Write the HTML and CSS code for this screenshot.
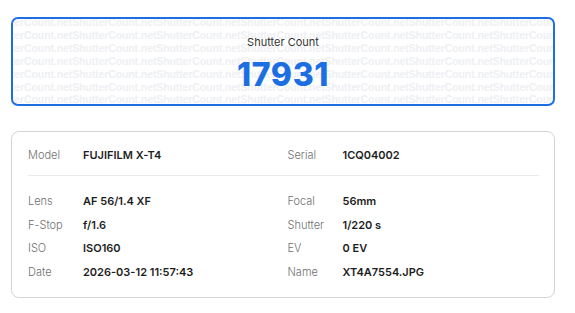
FILE: index.html
```html
<!DOCTYPE html>
<html lang="en">

<head>
    <meta charset="UTF-8">
    <meta name="viewport" content="width=device-width, initial-scale=1.0">
    <title>ShutterCount - Result</title>

    <link rel="stylesheet" href="styles.css">
</head>

<body>
    <div class="count-card">
        <div class="watermark">
            <div>ShutterCount.netShutterCount.netShutterCount.netShutterCount.netShutterCount.netShutterCount.netShutterCount.net</div>
            <div>ShutterCount.netShutterCount.netShutterCount.netShutterCount.netShutterCount.netShutterCount.netShutterCount.net</div>
            <div>ShutterCount.netShutterCount.netShutterCount.netShutterCount.netShutterCount.netShutterCount.netShutterCount.net</div>
            <div>ShutterCount.netShutterCount.netShutterCount.netShutterCount.netShutterCount.netShutterCount.netShutterCount.net</div>
            <div>ShutterCount.netShutterCount.netShutterCount.netShutterCount.netShutterCount.netShutterCount.netShutterCount.net</div>
            <div>ShutterCount.netShutterCount.netShutterCount.netShutterCount.netShutterCount.netShutterCount.netShutterCount.net</div>
            <div>ShutterCount.netShutterCount.netShutterCount.netShutterCount.netShutterCount.netShutterCount.netShutterCount.net</div>
        </div>
        <div class="count-title">Shutter Count</div>
        <div class="count-number">17931</div>
    </div>

    <div class="info-card">
        <div class="info-grid info-head">
            <div class="info-row"><span class="info-label">Model</span><span class="info-value">FUJIFILM X-T4</span></div>
            <div class="info-row"><span class="info-label">Serial</span><span class="info-value">1CQ04002</span></div>
        </div>
        <div class="info-grid info-body">
            <div class="info-row"><span class="info-label">Lens</span><span class="info-value">AF 56/1.4 XF</span></div>
            <div class="info-row"><span class="info-label">Focal</span><span class="info-value">56mm</span></div>
            <div class="info-row"><span class="info-label">F-Stop</span><span class="info-value">f/1.6</span></div>
            <div class="info-row"><span class="info-label">Shutter</span><span class="info-value">1/220 s</span></div>
            <div class="info-row"><span class="info-label">ISO</span><span class="info-value">ISO160</span></div>
            <div class="info-row"><span class="info-label">EV</span><span class="info-value">0 EV</span></div>
            <div class="info-row"><span class="info-label">Date</span><span class="info-value">2026-03-12 11:57:43</span></div>
            <div class="info-row"><span class="info-label">Name</span><span class="info-value">XT4A7554.JPG</span></div>
        </div>
    </div>
</body>

</html>
```

FILE: styles.css
```css
body {
    margin: 0;
    padding: 17px 20px 0 11px;
    font-family: Inter, "Noto Sans", sans-serif;
    background-color: white;
}

.count-card {
    position: relative;
    height: 85px;
    border: 2px solid #1b6fe3;
    border-radius: 7px;
    overflow: hidden;
    text-align: center;
}

.watermark {
    position: absolute;
    top: -3px;
    left: 0;
    right: 0;
    bottom: 0;
    font-family: "Liberation Sans", Arial, sans-serif;
    font-weight: bold;
    font-size: 10.5px;
    letter-spacing: -0.1px;
    line-height: 12.9px;
    color: #eef0f3;
    white-space: nowrap;
    text-indent: -25px;
    text-align: left;
}

.count-title {
    position: relative;
    padding-top: 16px;
    font-size: 11px;
    line-height: 14px;
    color: #333;
}

.count-number {
    position: relative;
    margin-top: 8px;
    font-size: 32px;
    font-weight: 800;
    letter-spacing: 0.6px;
    line-height: 36px;
    color: #1b6fe3;
}

.info-card {
    margin-top: 25px;
    border: 1px solid #d4d4d4;
    border-radius: 8px;
    padding: 0 15px 15px 16px;
}

.info-grid {
    display: grid;
    grid-template-columns: 1fr 1fr;
    column-gap: 8px;
}

.info-head {
    padding: 13px 0 10px;
    border-bottom: 1px solid #ebebeb;
}

.info-body {
    padding-top: 15px;
    row-gap: 3.5px;
}

.info-row {
    display: flex;
    font-size: 11px;
    line-height: 20px;
}

.info-label {
    width: 55px;
    color: #707070;
    font-weight: 300;
}

.info-value {
    color: #1e1e1e;
    font-weight: 600;
}
```
